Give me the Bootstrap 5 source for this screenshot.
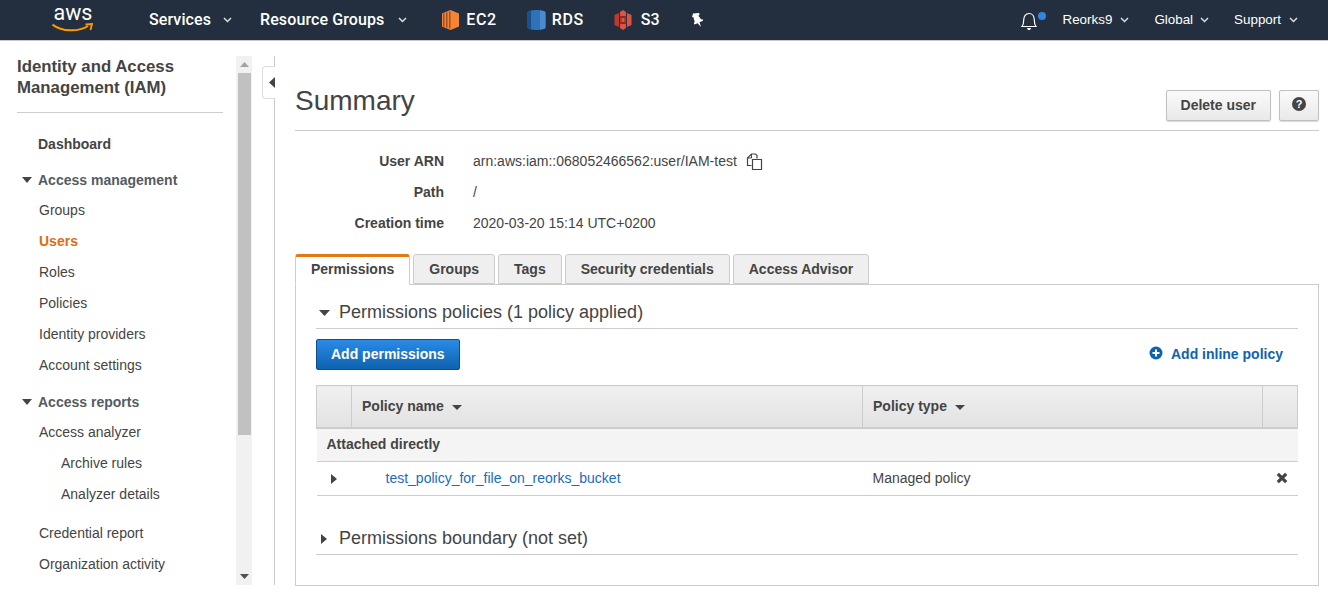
<!DOCTYPE html>
<html>

<head>
    <meta charset="UTF-8">
    <title>IAM Management Console</title>
    <link rel="stylesheet" href="https://cdn.jsdelivr.net/npm/bootstrap@5.3.0/dist/css/bootstrap.min.css">
    <style>
        html, body { height: 594px; overflow: hidden; }
        body { font-family: "Liberation Sans", Arial, sans-serif; font-size: 14px; color: #444; background: #fff; }
        a { text-decoration: none; }

        /* top bar */
        #topBar { height: 41px; background: #232f3e; border-bottom: 1px solid #c8c8c8; font-family: Roboto, "Liberation Sans", sans-serif; color: #fff; }
        #topBar .aws-logo { margin-left: 52px; width: 58px; height: 40px; }
        .top-main { font-size: 16px; font-weight: 500; color: #fff; white-space: nowrap; letter-spacing: .1px; }
        .top-main.svc-tag { letter-spacing: .6px; }
        .top-small { font-family: "Liberation Sans", Arial, sans-serif; font-size: 13.4px; color: #fff; white-space: nowrap; }
        .caret-small { display: inline-block; width: 9px; height: 6px; }
        .bell-wrap { position: relative; width: 18px; height: 20px; }
        .bell-dot { position: absolute; top: 2px; left: 18px; width: 8px; height: 8px; border-radius: 50%; background: #2e86de; }

        /* side menu */
        #sideMenu { width: 236px; flex: none; padding: 15px 13px 0 17px; overflow: hidden; }
        #sideMenu h1 { font-size: 16.8px; line-height: 21px; font-weight: 700; color: #444; margin: 0 0 14px; }
        #sideMenu hr { margin: 0 0 16px; border-color: #ccc; opacity: 1; }
        .menu-link { display: block; height: 31px; line-height: 31px; color: #444; white-space: nowrap; padding-left: 22px; }
        .menu-link.active-link { color: #dd6b10; font-weight: 700; }
        .menu-link.nested { padding-left: 44px; }
        .menu-head { display: flex; align-items: center; height: 30px; font-weight: 700; color: #545b64; white-space: nowrap; }
        .menu-head svg { width: 12px; margin: 0 5px 0 4px; flex: none; }
        .menu-dash { font-weight: 700; padding-left: 21px; color: #444; margin-bottom: 5px; }
        .gap-a { margin-top: 6px; }
        .gap-b { margin-top: 8px; }

        /* scrollbar */
        #fakeScroll { width: 16px; flex: none; height: 529px; margin-top: 15px; background: #f1f1f1; display: flex; flex-direction: column; align-items: center; }
        #fakeScroll .arrow-box { height: 17px; display: flex; align-items: center; justify-content: center; }
        #fakeScroll .thumb-bar { width: 13px; height: 362px; background: #c1c1c1; }

        /* collapse handle + content */
        #splitZone { position: relative; width: 23px; flex: none; height: 529px; margin-top: 15px; border-right: 1px solid #c8c8c8; }
        #collapseTab { position: absolute; top: 10px; right: -1px; width: 13px; height: 33px; background: #fff; border: 1px solid #ddd; border-right: 0; border-radius: 4px 0 0 4px; display: flex; align-items: center; justify-content: flex-end; }
        #contentArea { flex: 1; padding: 0 9px 0 20px; min-width: 0; }

        .page-head { height: 90px; border-bottom: 1px solid #ccc; padding-top: 42px; }
        .page-head h2 { font-size: 28px; font-weight: 400; line-height: 36px; color: #444; margin: 0; }
        .head-btns { padding-top: 7px; }
        .aws-btn { font-family: "Liberation Sans", Arial, sans-serif; font-size: 14px; font-weight: 700; color: #444; height: 31px; padding: 0 14px; background: linear-gradient(#fafafa, #e9e9e9); border: 1px solid #c0c0c0; border-radius: 2px; box-shadow: 0 1px 1px rgba(0,0,0,.15); }
        .aws-btn:hover { color: #444; border-color: #c0c0c0; }
        .help-btn { width: 40px; padding: 0; }
        .help-round { display: block; width: 14px; height: 14px; margin: -3px auto 0; border-radius: 50%; background: #444; color: #fff; font-size: 11px; font-weight: 700; line-height: 14px; text-align: center; }

        .info-grid { margin-top: 15px; }
        .info-line { display: flex; height: 31px; line-height: 31px; }
        .info-line .info-key { width: 149px; text-align: right; font-weight: 700; color: #444; flex: none; }
        .info-line .info-val { margin-left: 29px; color: #444; display: flex; align-items: center; }

        /* tabs */
        .tab-row { margin-top: 15px; gap: 3px; position: relative; z-index: 1; margin-bottom: -1px; align-items: flex-start; }
        .tab-item { height: 30px; line-height: 28px; padding: 0 15px; font-weight: 700; color: #444; background: #efefef; border: 1px solid #ccc; border-radius: 3px 3px 0 0; white-space: nowrap; }
        .tab-item.on { height: 31px; background: #fff; border-top: 3px solid #e47911; border-bottom-color: #fff; line-height: 25px; }
        .tab-panel { height: 302px; border: 1px solid #ccc; padding: 10px 20px 0; }

        .sect-head { display: flex; align-items: center; height: 34px; padding-top: 2px; border-bottom: 1px solid #ccc; font-size: 18px; color: #444; }
        .sect-head svg { margin: 0 9px 0 3px; flex: none; }
        .sect-head.boundary svg { margin: 0 12px 0 5px; }
        .act-row { margin-top: 10px; height: 31px; }
        .blue-btn { font-weight: 700; font-size: 14px; height: 31px; padding: 0 14px; color: #fff; background: linear-gradient(#2a8be6, #0f62ae); border: 1px solid #0b4f91; border-radius: 2px; }
        .blue-btn:hover { color: #fff; background: linear-gradient(#2a8be6, #0f62ae); border-color: #0b4f91; }
        .inline-link { color: #0f62ae; font-weight: 700; margin-right: 15px; display: flex; align-items: center; gap: 8px; }
        .inline-link svg { margin-bottom: 4px; }

        /* policies table */
        .policy-tbl { margin: 15px 0 0; table-layout: fixed; border-collapse: collapse; width: 981px; }
        .policy-tbl > :not(caption) > * > * { padding: 0 10px; box-shadow: none; color: #444; background: transparent; }
        .policy-tbl thead th { height: 42px; background: linear-gradient(#f0f0f0, #e2e2e2); border: 1px solid #ccc; border-width: 1px 1px 2px; font-weight: 700; vertical-align: middle; }
        .policy-tbl .grp td { height: 34px; background: #f4f4f4; font-weight: 700; border-bottom: 1px solid #ccc; padding: 0 10px; vertical-align: middle; }
        .policy-tbl .dat td { height: 34px; border-bottom: 1px solid #ccc; vertical-align: middle; }
        .policy-tbl a { color: #1a6cba; margin-left: 24px; }
        .policy-tbl .close-x { margin-bottom: 2px; }
        .boundary { margin-top: 25px; }
    </style>
</head>

<body>
    <!-- top navigation -->
    <nav id="topBar" class="d-flex align-items-center">
        <div class="aws-logo">
            <svg width="42" height="40" viewBox="0 0 42 40">
                <text x="1.500" y="20" font-family="Roboto, 'Liberation Sans', sans-serif" font-size="21.500" fill="#fff">aws</text>
                <path d="M.5 24.500C10 32 27 32 36 26" fill="none" stroke="#f90" stroke-width="2"/>
                <path d="M33.500 24.500 40 24l-1.500 6" fill="none" stroke="#f90" stroke-width="1.800"/>
            </svg>
        </div>
        <div class="d-flex align-items-center flex-grow-1" style="margin-left:39px">
            <a class="top-main" href="#">Services</a>
            <svg class="caret-small" style="margin-left:12px" viewBox="0 0 9 6"><path d="M1 1l3.500 3.500L8 1" fill="none" stroke="#ddd" stroke-width="1.500"/></svg>
            <a class="top-main" style="margin-left:28px" href="#">Resource Groups</a>
            <svg class="caret-small" style="margin-left:14px" viewBox="0 0 9 6"><path d="M1 1l3.500 3.500L8 1" fill="none" stroke="#ddd" stroke-width="1.500"/></svg>
            <svg style="margin-left:34px" width="18" height="20" viewBox="0 0 18 20"><path d="M9.500 0 18 3.500v13L9.500 20 1 16.500v-13z" fill="#f58536"/><path d="M2 3.500h1.500v13H2zM5 2.500h1.500v15H5zM8 1.500h1.500v17H8z" fill="#9d5025"/></svg>
            <a class="top-main svc-tag" style="margin-left:7px" href="#">EC2</a>
            <svg style="margin-left:30px" width="19" height="20" viewBox="0 0 19 20"><path d="M9.500 0c5 0 9 1 9 2.500v15c0 1.500-4 2.500-9 2.500S.5 19 .5 17.500v-15C.5 1 4.500 0 9.500 0z" fill="#2e73b8"/><path d="M4 .6C2 1 .5 1.700.5 2.500v15c0 .8 1.500 1.500 3.500 1.900z" fill="#1a4f8a"/><path d="M13 .4v19.200c3-.3 5.500-1.100 5.500-2.100v-15c0-1-2.500-1.800-5.500-2.100z" fill="#4a8ccb"/></svg>
            <a class="top-main svc-tag" style="margin-left:6px" href="#">RDS</a>
            <svg style="margin-left:30px" width="18" height="20" viewBox="0 0 18 20"><path d="M6 2l3-2 3 2v16l-3 2-3-2z" fill="#e05243"/><path d="M.5 5 5 3v14l-4.500-2z" fill="#c1392b"/><path d="M17.500 5 13 3v14l4.500-2z" fill="#e05243"/><path d="M5 7h8M5 13h8" stroke="#7a2a1e" stroke-width="1.300"/><path d="M7 7h4v6H7z" fill="none" stroke="#7a2a1e"/></svg>
            <a class="top-main" style="margin-left:9px" href="#">S3</a>
            <svg style="margin-left:30px" width="13" height="14" viewBox="0 0 13 14"><path d="M3 .5 9 0l.7 1.500-1.300 1.200 2.800 3.800 1.300-.4.500 1.700-3.500 1.500 1.500 4.700-3.500-3.800-3.200 1.300-.5-1.700 1-.8L3.300 4 2 4.200z" fill="#fff"/></svg>
        </div>
        <div class="d-flex align-items-center">
            <div class="bell-wrap">
                <svg width="18" height="20" viewBox="0 0 18 20"><path d="M2 15.500c1.200-1.500 1.700-3 1.700-6.500 0-3.500 2-6.500 5.300-6.500s5.300 3 5.300 6.500c0 3.500.5 5 1.700 6.500z" fill="none" stroke="#fff" stroke-width="1.200"/><path d="M7 17h4l-1 2H8z" fill="#fff"/></svg>
                <span class="bell-dot"></span>
            </div>
            <a class="top-small" style="margin-left:25px" href="#">Reorks9</a>
            <svg class="caret-small" style="margin-left:8px" viewBox="0 0 9 6"><path d="M1 1l3.500 3.500L8 1" fill="none" stroke="#ddd" stroke-width="1.500"/></svg>
            <a class="top-small" style="margin-left:25px" href="#">Global</a>
            <svg class="caret-small" style="margin-left:7px" viewBox="0 0 9 6"><path d="M1 1l3.500 3.500L8 1" fill="none" stroke="#ddd" stroke-width="1.500"/></svg>
            <a class="top-small" style="margin-left:25px" href="#">Support</a>
            <svg class="caret-small" style="margin-left:8px;margin-right:30px" viewBox="0 0 9 6"><path d="M1 1l3.500 3.500L8 1" fill="none" stroke="#ddd" stroke-width="1.500"/></svg>
        </div>
    </nav>

    <div class="d-flex">
        <!-- side menu -->
        <aside id="sideMenu">
            <h1>Identity and Access Management (IAM)</h1>
            <hr>
            <a class="menu-link menu-dash" href="#">Dashboard</a>
            <div class="menu-head"><svg width="12" height="6" viewBox="0 0 12 6"><path d="M1 0h10L6 6z" fill="#444"/></svg>Access management</div>
            <a class="menu-link" href="#">Groups</a>
            <a class="menu-link active-link" href="#">Users</a>
            <a class="menu-link" href="#">Roles</a>
            <a class="menu-link" href="#">Policies</a>
            <a class="menu-link" href="#">Identity providers</a>
            <a class="menu-link" href="#">Account settings</a>
            <div class="menu-head gap-a"><svg width="12" height="6" viewBox="0 0 12 6"><path d="M1 0h10L6 6z" fill="#444"/></svg>Access reports</div>
            <a class="menu-link" href="#">Access analyzer</a>
            <a class="menu-link nested" href="#">Archive rules</a>
            <a class="menu-link nested" href="#">Analyzer details</a>
            <a class="menu-link gap-b" href="#">Credential report</a>
            <a class="menu-link" href="#">Organization activity</a>
        </aside>

        <div id="fakeScroll">
            <div class="arrow-box"><svg width="9" height="5" viewBox="0 0 9 5"><path d="M4.500 0 9 5H0z" fill="#a3a3a3"/></svg></div>
            <div class="thumb-bar"></div>
            <div class="flex-grow-1"></div>
            <div class="arrow-box"><svg width="9" height="5" viewBox="0 0 9 5"><path d="M0 0h9L4.500 5z" fill="#505050"/></svg></div>
        </div>

        <div id="splitZone">
            <div id="collapseTab"><svg width="6" height="11" viewBox="0 0 6 11"><path d="M6 0v11L0 5.500z" fill="#444"/></svg></div>
        </div>

        <!-- main content -->
        <main id="contentArea">
            <div class="page-head d-flex justify-content-between align-items-start">
                <h2>Summary</h2>
                <div class="d-flex gap-2 head-btns">
                    <button class="btn aws-btn">Delete user</button>
                    <button class="btn aws-btn help-btn"><span class="help-round">?</span></button>
                </div>
            </div>

            <div class="info-grid">
                <div class="info-line">
                    <div class="info-key">User ARN</div>
                    <div class="info-val">arn:aws:iam::068052466562:user/IAM-test
                        <svg style="margin-left:9px" width="17" height="17" viewBox="0 0 17 17"><path d="M5.500 12.500h-4V5l4-4h4l1.500 1.500v3" fill="none" stroke="#444" stroke-width="1.200"/><path d="M5.500 1v4h-4" fill="none" stroke="#444" stroke-width="1"/><path d="M6.500 6.500h6l3 0v10h-9z" fill="#fff" stroke="#444" stroke-width="1.200"/></svg>
                    </div>
                </div>
                <div class="info-line">
                    <div class="info-key">Path</div>
                    <div class="info-val">/</div>
                </div>
                <div class="info-line">
                    <div class="info-key">Creation time</div>
                    <div class="info-val">2020-03-20 15:14 UTC+0200</div>
                </div>
            </div>

            <div class="tab-row d-flex">
                <div class="tab-item on">Permissions</div>
                <div class="tab-item">Groups</div>
                <div class="tab-item">Tags</div>
                <div class="tab-item">Security credentials</div>
                <div class="tab-item">Access Advisor</div>
            </div>
            <div class="tab-panel">
                <div class="sect-head"><svg width="11" height="6" viewBox="0 0 11 6"><path d="M0 0h11L5.500 6z" fill="#444"/></svg>Permissions policies (1 policy applied)</div>
                <div class="act-row d-flex justify-content-between align-items-center">
                    <button class="btn blue-btn">Add permissions</button>
                    <a class="inline-link" href="#">
                        <svg width="14" height="14" viewBox="0 0 14 14"><circle cx="7" cy="7" r="6.500" fill="#0f62ae"/><path d="M7 3.500v7M3.500 7h7" stroke="#fff" stroke-width="2"/></svg>
                        Add inline policy</a>
                </div>
                <table class="table policy-tbl">
                    <colgroup><col style="width:35px"><col style="width:511px"><col style="width:400px"><col style="width:35px"></colgroup>
                    <thead>
                        <tr>
                            <th></th>
                            <th>Policy name <svg class="ms-1" width="10" height="5" viewBox="0 0 10 5"><path d="M0 0h10L5 5z" fill="#444"/></svg></th>
                            <th>Policy type <svg class="ms-1" width="10" height="5" viewBox="0 0 10 5"><path d="M0 0h10L5 5z" fill="#444"/></svg></th>
                            <th></th>
                        </tr>
                    </thead>
                    <tbody>
                        <tr class="grp"><td colspan="4">Attached directly</td></tr>
                        <tr class="dat">
                            <td class="text-center"><svg width="6" height="10" viewBox="0 0 6 10"><path d="M0 0l6 5-6 5z" fill="#444"/></svg></td>
                            <td><a href="#">test_policy_for_file_on_reorks_bucket</a></td>
                            <td>Managed policy</td>
                            <td class="text-end"><svg class="close-x" width="12" height="12" viewBox="0 0 12 12"><path d="M1.800 1.800l8.400 8.400M10.200 1.800l-8.400 8.400" stroke="#444" stroke-width="3.200"/></svg></td>
                        </tr>
                    </tbody>
                </table>
                <div class="sect-head boundary"><svg width="6" height="10" viewBox="0 0 6 10"><path d="M0 0l6 5-6 5z" fill="#444"/></svg>Permissions boundary (not set)</div>
            </div>
        </main>
    </div>

    <script src="https://cdn.jsdelivr.net/npm/bootstrap@5.3.0/dist/js/bootstrap.bundle.min.js"></script>
</body>

</html>
